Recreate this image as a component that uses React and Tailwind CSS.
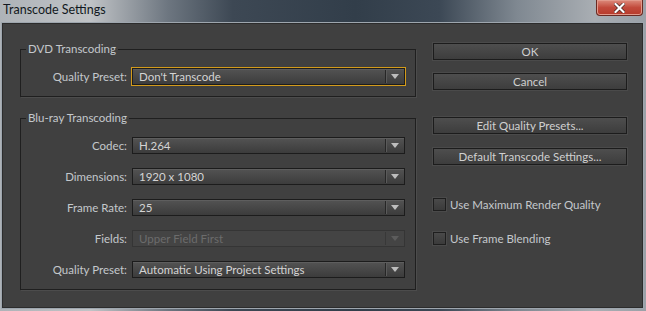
import React from 'react';

const font = { fontFamily: 'Lato, "Noto Sans", sans-serif' };

const Arrow = ({ dim }) => (
    <svg width="8" height="5" viewBox="0 0 8 5">
        <polygon points="0,0 8,0 4,5" fill={dim ? '#5c5c5c' : '#bdbdbd'} />
    </svg>
);

const Dropdown = ({ value, focused, disabled }) => (
    <div
        className={
            'flex h-[17px] w-[273px] items-center border ' +
            (disabled
                ? 'border-[#353535] bg-[#444444] text-[#6c6c6c]'
                : 'border-[#1c1c1c] bg-gradient-to-b from-[#535353] to-[#3c3c3c] text-[#d4d4d4] shadow-[inset_0_1px_0_#5e5e5e]') +
            (focused ? ' outline outline-1 outline-[#d39b1b]' : '')
        }
    >
        <span className="flex-1 truncate pl-[6px] text-[11.5px] leading-[15px]">{value}</span>
        <span className={'h-[13px] w-px ' + (disabled ? 'bg-[#383838]' : 'bg-[#262626] shadow-[1px_0_0_#5a5a5a]')} />
        <span className="flex w-[18px] justify-center">
            <Arrow dim={disabled} />
        </span>
    </div>
);

const Row = ({ label, children }) => (
    <div className="grid grid-cols-[111px_273px] items-center">
        <span className="pr-[5px] text-right text-[11.5px] leading-[15px] text-[#c4c8cc]">{label}</span>
        {children}
    </div>
);

const Group = ({ title, children }) => (
    <fieldset className="w-[396px] border border-[#1f1f1f] pb-[11px] pr-[10px] shadow-[1px_1px_0_#4c4c4c]">
        <legend className="ml-[5px] px-[2px] text-[11.5px] leading-[16px] text-[#c4c8cc]">{title}</legend>
        <div className="mt-[11px] flex flex-col gap-[14px]">{children}</div>
    </fieldset>
);

const Button = ({ children, className = '' }) => (
    <button
        className={
            'flex h-[17px] w-[194px] items-center justify-center border border-[#1c1c1c] bg-gradient-to-b from-[#4e4e4e] to-[#3d3d3d] text-[11.5px] leading-[15px] text-[#d0d0d0] shadow-[0_0_0_1px_#4a4a4a] ' +
            className
        }
    >
        {children}
    </button>
);

const Check = ({ label, className = '' }) => (
    <label className={'flex items-center gap-[4px] ' + className}>
        <span className="h-[13px] w-[13px] border border-[#1e1e1e] bg-gradient-to-b from-[#4a4a4a] to-[#3a3a3a] shadow-[0_0_0_1px_#4a4a4a]" />
        <span className="text-[11.5px] leading-[15px] text-[#c4c8cc]">{label}</span>
    </label>
);

export default function App() {
    return (
        <div
            className="flex h-[311px] w-[646px] flex-col bg-[linear-gradient(90deg,#aeb3b8_0%,#c0c3c6_14%,#6d7680_26%,#3d4854_36%,#323e4a_55%,#3c4855_68%,#7f8891_80%,#a9aeb3_92%,#9aa1a8_100%)]"
            style={font}
        >
            {/* 타이틀 바 */}
            <div className="flex h-[23px] items-start justify-between">
                <span className="pl-[3px] pt-[2px] text-[12.5px] leading-[16px] text-[#111820]">Transcode Settings</span>
                <div className="mr-[3px] flex h-[16px] w-[47px] items-center justify-center rounded-b-[4px] border border-t-0 border-[#6a2a22] bg-gradient-to-b from-[#dc8a7c] via-[#c24a3c] to-[#b63a2a] shadow-[inset_0_0_0_1px_#e29a8c]">
                    <svg width="11" height="10" viewBox="0 0 11 10">
                        <path d="M1.5 1 L9.5 9 M9.5 1 L1.5 9" stroke="#3a1a16" strokeWidth="3.4" strokeLinecap="square" />
                        <path d="M1.5 1 L9.5 9 M9.5 1 L1.5 9" stroke="#ffffff" strokeWidth="2.2" strokeLinecap="square" />
                    </svg>
                </div>
            </div>

            {/* 본문 */}
            <div className="ml-[2px] mr-[3px] flex h-[285px] border border-[#2c2c2c] bg-[#404040] shadow-[0_0_0_1px_#9ea6ae]">
                <div className="flex flex-col gap-[13px] pl-[17px] pt-[17px]">
                    <Group title="DVD Transcoding">
                        <Row label="Quality Preset:">
                            <Dropdown value="Don't Transcode" focused />
                        </Row>
                    </Group>
                    <Group title="Blu-ray Transcoding">
                        <Row label="Codec:">
                            <Dropdown value="H.264" />
                        </Row>
                        <Row label="Dimensions:">
                            <Dropdown value="1920 x 1080" />
                        </Row>
                        <Row label="Frame Rate:">
                            <Dropdown value="25" />
                        </Row>
                        <Row label="Fields:">
                            <Dropdown value="Upper Field First" disabled />
                        </Row>
                        <Row label="Quality Preset:">
                            <Dropdown value="Automatic Using Project Settings" />
                        </Row>
                    </Group>
                </div>

                <div className="ml-[17px] flex flex-col pt-[19px]">
                    <Button>OK</Button>
                    <Button className="mt-[13px]">Cancel</Button>
                    <Button className="mt-[27px]">Edit Quality Presets...</Button>
                    <Button className="mt-[14px]">Default Transcode Settings...</Button>
                    <Check label="Use Maximum Render Quality" className="mt-[32px]" />
                    <Check label="Use Frame Blending" className="mt-[19px]" />
                </div>
            </div>
        </div>
    );
}
